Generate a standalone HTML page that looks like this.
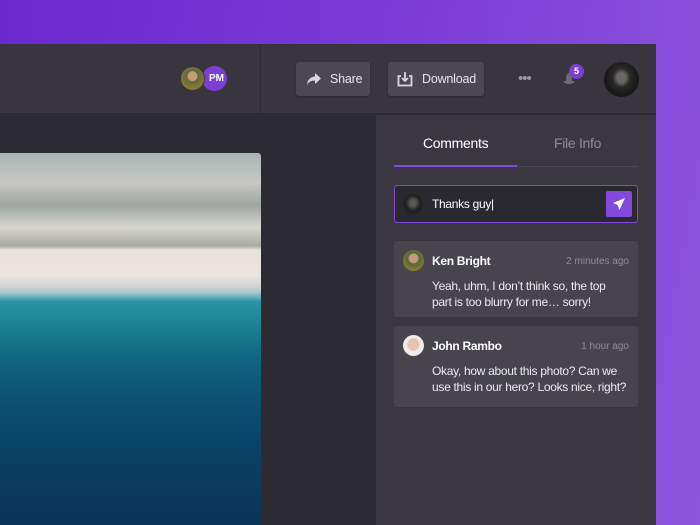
<!DOCTYPE html>
<html><head><meta charset="utf-8"><style>
*{margin:0;padding:0;box-sizing:border-box}
body{width:700px;height:525px;overflow:hidden;position:relative;font-family:"Liberation Sans",sans-serif;background:linear-gradient(100deg,#6a28cf 0%,#7a3bd6 50%,#8d55dd 100%)}
.app{position:absolute;left:0;top:44px;width:656px;height:481px;background:#2c2a32}
.hdr{position:absolute;left:0;top:0;width:656px;height:70px;background:#38353f;border-bottom:1px solid #2c2a31}
.vdiv{position:absolute;left:260px;top:0;width:1px;height:70px;background:#2f2c35}
.av{position:absolute;border-radius:50%}
.btn{position:absolute;top:18px;height:34px;background:#4b4853;border-radius:3px;color:#e4e2ea;font-size:12.5px;letter-spacing:-0.2px;display:flex;align-items:center;box-shadow:0 1px 2px rgba(0,0,0,.3)}
.side{position:absolute;left:376px;top:71px;width:280px;height:410px;background:#3a3741}
.tab{position:absolute;top:20px;font-size:14px;letter-spacing:-0.3px}
.card{position:absolute;left:18px;width:244px;background:#47444e;border-radius:3px}
.nm{position:absolute;left:38px;top:13px;color:#fff;font-weight:bold;font-size:12px;letter-spacing:-0.3px}
.tm{position:absolute;right:9px;top:15px;color:#8f8c96;font-size:10px}
.tx{position:absolute;left:38px;top:37px;color:#ecebf0;font-size:12px;letter-spacing:-0.3px;line-height:16px;white-space:nowrap}
.img{position:absolute;left:0;top:109px;width:261px;height:372px;border-radius:0 3px 0 0;overflow:hidden;background:linear-gradient(180deg,#a9b3b4 0%,#c8c8c4 8%,#9fa5a2 14%,#d8d6d0 20%,#a8aaa6 25%,#e8e0dc 26%,#ebe3df 33%,#cfd3d4 36%,#a5c9d0 37.5%,#2a93a6 40%,#1b8094 47%,#0f6680 55%,#0b4e72 68%,#0a3d62 85%,#0a3458 100%)}
</style></head><body>
<div class="app">
 <div class="hdr">
  <div class="vdiv"></div>
  <div class="av" style="left:202px;top:22px;width:25px;height:25px;background:#7b3fd4;color:#fff;font-size:10px;font-weight:bold;text-align:center;line-height:25px;padding-left:4px">PM</div>
  <div class="av" style="left:180px;top:22px;width:25px;height:25px;background:radial-gradient(circle at 50% 40%,#c99a7a 0 25%,#5c6b3e 30%,#8b7a2e 70%);border:1px solid #38353f"></div>
  <div class="btn" style="left:296px;width:74px"><svg style="margin:0 8px 0 10px" width="16" height="14" viewBox="0 0 16 14"><path d="M9 1 L15 6.5 L9 12 V8.5 C5 8.5 2.5 10 1 13 C1.5 8 4 5 9 4.5 Z" fill="#d8d6de"/></svg>Share</div>
  <div class="btn" style="left:388px;width:96px"><svg style="margin:0 9px 0 9px" width="16" height="16" viewBox="0 0 16 16" fill="none" stroke="#d8d6de" stroke-width="1.8"><path d="M4 5H1.5V14.5H14.5V5H12"/><path d="M8 1V10M5 7L8 10L11 7"/></svg>Download</div>
  <div style="position:absolute;left:518px;top:26px;color:#9a97a2;font-size:15px;letter-spacing:-1px">•••</div>
  <svg style="position:absolute;left:561px;top:26px" width="16" height="16" viewBox="0 0 16 16"><path d="M8 3C6 3 5 6 5 9V11H2.5C2.5 13 5 14 8 14C11 14 13.5 13 13.5 11H11V9C11 6 10 3 8 3Z" fill="#6d6a74"/></svg>
  <div class="av" style="left:569px;top:20px;width:15px;height:15px;background:#7b3fd4;color:#fff;font-size:9px;font-weight:bold;text-align:center;line-height:15px">5</div>
  <div class="av" style="left:604px;top:18px;width:35px;height:35px;background:radial-gradient(ellipse at 50% 45%,#6a6664 0 18%,#2a2828 35%,#161616 70%)"></div>
 </div>
 <div class="img"></div>
 <div class="side">
  <div class="tab" style="left:47px;color:#fff">Comments</div>
  <div class="tab" style="left:178px;color:#8f8c96">File Info</div>
  <div style="position:absolute;left:18px;top:51px;width:244px;height:1px;background:#4a4751"></div>
  <div style="position:absolute;left:18px;top:50px;width:123px;height:2px;background:#8249db"></div>
  <div style="position:absolute;left:18px;top:70px;width:244px;height:38px;background:#2b2930;border:1px solid #8249db;border-radius:3px">
   <div class="av" style="left:8px;top:8px;width:20px;height:20px;background:radial-gradient(ellipse at 50% 45%,#5a5654 0 20%,#222 50%)"></div>
   <div style="position:absolute;left:37px;top:11px;color:#fff;font-size:12px;letter-spacing:-0.3px">Thanks guy|</div>
   <div style="position:absolute;right:5px;top:5px;width:26px;height:26px;background:#8249db;border-radius:2px"><svg style="position:absolute;left:6px;top:6px" width="14" height="14" viewBox="0 0 14 14"><path d="M13 1L1 6L5.5 8L7.5 13Z" fill="#fff"/></svg></div>
  </div>
  <div class="card" style="top:126px;height:76px">
   <div class="av" style="left:9px;top:9px;width:21px;height:21px;background:radial-gradient(circle at 50% 40%,#c99a7a 0 25%,#4f6a3a 35%,#8b7a2e 75%)"></div>
   <div class="nm">Ken Bright</div><div class="tm">2 minutes ago</div>
   <div class="tx">Yeah, uhm, I don’t think so, the top<br>part is too blurry for me… sorry!</div>
  </div>
  <div class="card" style="top:211px;height:81px">
   <div class="av" style="left:9px;top:9px;width:21px;height:21px;background:radial-gradient(circle at 50% 45%,#e8c4b0 0 35%,#f0ece8 45%)"></div>
   <div class="nm">John Rambo</div><div class="tm">1 hour ago</div>
   <div class="tx">Okay, how about this photo? Can we<br>use this in our hero? Looks nice, right?</div>
  </div>
 </div>
</div>
</body></html>
